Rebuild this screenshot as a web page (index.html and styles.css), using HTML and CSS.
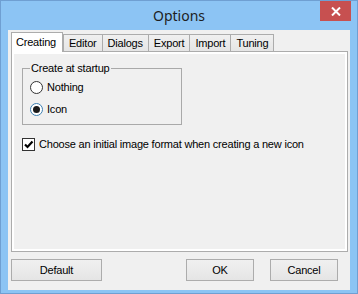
FILE: index.html
```html
<!DOCTYPE html>
<html lang="en">
  <head>
    <meta charset="UTF-8" />
    <title>Options</title>
    <link rel="stylesheet" href="styles.css">
  </head>
  <body>
    <div class="window">
      <div class="titlebar">
        <span class="title">Options</span>
        <span class="close">
          <svg width="10" height="9" viewBox="0 0 10 9">
            <path d="M1 0.5 L9 8.5 M9 0.5 L1 8.5" stroke="#fff" stroke-width="2" />
          </svg>
        </span>
      </div>
      <div class="client">
        <div class="tab-strip">
          <span class="tab active">Creating</span>
          <span class="tab">Editor</span>
          <span class="tab">Dialogs</span>
          <span class="tab">Export</span>
          <span class="tab">Import</span>
          <span class="tab">Tuning</span>
        </div>
        <div class="tab-page">
          <div class="page-body">
            <fieldset class="group">
              <legend>Create at startup</legend>
              <div class="option"><span class="radio"></span>Nothing</div>
              <div class="option"><span class="radio checked"></span>Icon</div>
            </fieldset>
            <div class="check-row">
              <span class="checkbox">
                <svg width="11" height="11" viewBox="0 0 11 11">
                  <path d="M2 5.5 L4.5 8 L9.5 2.5" fill="none" stroke="#000" stroke-width="2.2" />
                </svg>
              </span>
              Choose an initial image format when creating a new icon
            </div>
          </div>
        </div>
        <div class="buttons">
          <span class="btn btn-default">Default</span>
          <span class="btn btn-ok">OK</span>
          <span class="btn btn-cancel">Cancel</span>
        </div>
      </div>
    </div>
  </body>
</html>
```

FILE: styles.css
```css
* {
  margin: 0;
  padding: 0;
  box-sizing: border-box;
}
body {
  font-family: "Liberation Sans", Arial, sans-serif;
  font-size: 11px;
  letter-spacing: -0.2px;
  color: #000;
}
.window {
  width: 358px;
  height: 294px;
  border: 1px solid #6f9fd2;
  background-color: #8cc4f4;
  padding: 0 7px 3px;
  display: flex;
  flex-direction: column;
}
.titlebar {
  height: 29px;
  display: grid;
  grid-template-columns: 1fr auto 1fr;
  align-items: start;
}
.title {
  grid-column: 2;
  font-family: "Noto Sans", sans-serif;
  font-size: 14px;
  letter-spacing: 0;
  line-height: 29px;
  color: #1e1e1e;
}
.close {
  grid-column: 3;
  justify-self: end;
  width: 31px;
  height: 20px;
  margin-right: -1px;
  background-color: #c75050;
  display: flex;
  align-items: center;
  justify-content: center;
}
.client {
  flex: 1;
  background-color: #f0f0f0;
  padding: 2px 2px 9px 3px;
  display: flex;
  flex-direction: column;
}
.tab-strip {
  height: 19px;
  display: flex;
  align-items: flex-end;
  position: relative;
  z-index: 1;
}
.tab {
  height: 17px;
  line-height: 16px;
  padding: 0 5px;
  border: 1px solid #acacac;
  border-bottom: none;
  background: linear-gradient(#f0f0f0, #e5e5e5);
  margin-left: -1px;
}
.tab.active {
  height: 20px;
  line-height: 18px;
  margin-left: 0;
  margin-bottom: -1px;
  padding: 0 6px 0 4px;
  background: #fff;
}
.tab.active + .tab {
  margin-left: 0;
}
.tab-page {
  height: 201px;
  border: 1px solid #acacac;
  background-color: #fff;
  padding: 2px;
}
.page-body {
  height: 100%;
  background-color: #f0f0f0;
  padding: 8px 0 0 8px;
}
.group {
  width: 160px;
  height: 63px;
  border: 1px solid #a9a9a9;
  padding: 0 0 0 7px;
}
.group legend {
  padding: 0 1px;
  line-height: 13px;
}
.option {
  height: 22px;
  display: flex;
  align-items: center;
  gap: 4px;
}
.option:first-of-type {
  margin-top: 1px;
}
.radio {
  width: 13px;
  height: 13px;
  border: 1px solid #333;
  border-radius: 50%;
  background-color: #fff;
  display: flex;
  align-items: center;
  justify-content: center;
}
.radio.checked {
  border-color: #3c7fb1;
}
.radio.checked::after {
  content: "";
  width: 7px;
  height: 7px;
  border-radius: 50%;
  background-color: #1a1a1a;
}
.check-row {
  margin-top: 12px;
  height: 14px;
  display: flex;
  align-items: center;
  gap: 4px;
}
.checkbox {
  width: 13px;
  height: 13px;
  border: 1px solid #333;
  background-color: #fff;
  display: flex;
  align-items: center;
  justify-content: center;
}
.buttons {
  margin-top: 7px;
  padding-right: 10px;
  display: flex;
}
.btn {
  height: 22px;
  border: 1px solid #acacac;
  background: linear-gradient(#f0f0f0, #e5e5e5);
  display: flex;
  align-items: center;
  justify-content: center;
}
.btn-default {
  width: 91px;
  margin-right: auto;
}
.btn-ok {
  width: 68px;
  margin-right: 16px;
}
.btn-cancel {
  width: 68px;
}
```
